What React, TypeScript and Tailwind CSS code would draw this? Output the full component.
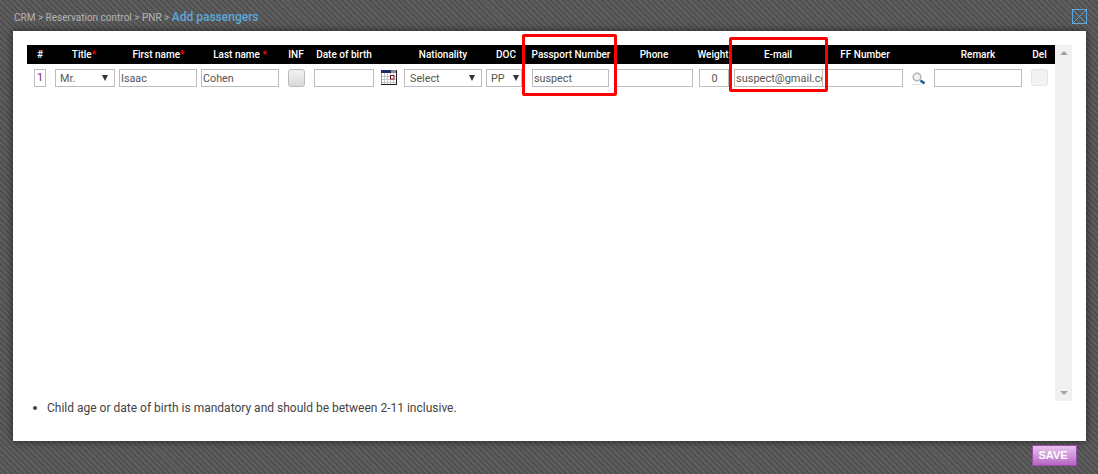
const font = "font-['Roboto',sans-serif]"

function Th({ w, label, star, className = '' }: { w: string; label: string; star?: string; className?: string }) {
  return (
    <div className={`${w} shrink-0 text-center whitespace-nowrap ${className}`}>
      {label}
      {star && <span className="text-[#e11]">{star}</span>}
    </div>
  )
}

function Arrow({ className = 'right-[6px]' }: { className?: string }) {
  return <span className={`absolute top-[5px] h-0 w-0 border-x-[3.5px] border-t-[6px] border-x-transparent border-t-[#333] ${className}`} />
}

function Box({ className = '', children }: { className?: string; children?: React.ReactNode }) {
  return (
    <div className={`relative h-[18px] shrink-0 border border-[#bdbdbd] bg-white pl-[1px] text-[10.75px] leading-[17px] text-[#555] overflow-hidden whitespace-nowrap ${className}`}>
      {children}
    </div>
  )
}

function CalendarIcon() {
  return (
    <svg width="16" height="15" viewBox="0 0 16 15" className="shrink-0">
      <rect x="0" y="0" width="16" height="15" fill="#fff" />
      <rect x="0" y="0" width="10" height="3" fill="#1d2a6b" />
      <rect x="10" y="0" width="5" height="3" fill="#8c8c8c" />
      <path d="M0 6.5h15M0 9.5h15M0 12.5h15M3.5 3v11M6.5 3v11M9.5 3v11M12.5 3v11" stroke="#c4c4cc" strokeWidth="1" />
      <path d="M15.5 0v15M0 14.5h16" stroke="#222" strokeWidth="1" />
      <path d="M0.5 3v11" stroke="#999" strokeWidth="1" />
      <rect x="9.5" y="5.5" width="3.5" height="3.5" fill="#fff" stroke="#7a1020" />
    </svg>
  )
}

function SearchIcon() {
  return (
    <svg width="14" height="14" viewBox="0 0 14 14" className="shrink-0">
      <circle cx="5" cy="5" r="3.8" fill="#f1f3f5" stroke="#b0b5ba" strokeWidth="1.5" />
      <path d="M8.5 8.5l4 3" stroke="#1f5c96" strokeWidth="2.6" />
      <path d="M0 12.5h9" stroke="#dedede" strokeWidth="1" />
    </svg>
  )
}

export default function App() {
  return (
    <div
      className={`relative h-[474px] w-[1098px] overflow-hidden bg-[#565656] ${font} bg-[repeating-linear-gradient(45deg,#4d4d4d_0px,#4d4d4d_1.4px,#5d5d5d_1.4px,#5d5d5d_4px)]`}
    >
      {/* breadcrumb */}
      <div className="flex h-[31px] items-center justify-between pl-[14px] pr-[11px] pt-[3px]">
        <div className="flex items-baseline text-[10px] text-[#b4b4b4]">
          <span>CRM &gt; Reservation control &gt; PNR &gt;&nbsp;</span>
          <span className="text-[12px] font-medium text-[#5ba9dc]">Add passengers</span>
        </div>
        <svg width="15" height="15" viewBox="0 0 15 15" className="mt-[-1px]">
          <rect x="0.5" y="0.5" width="14" height="14" fill="none" stroke="#5ba9dc" />
          <path d="M1 1l13 13M14 1L1 14" stroke="#5ba9dc" strokeWidth="0.8" />
        </svg>
      </div>

      {/* panel */}
      <div className="mx-[13px] flex h-[410px] w-[1073px] flex-col bg-white pl-[14px] pr-[14px] pt-[14px] shadow-[0_0_8px_rgba(0,0,0,0.6)]">
        <div className="flex h-[356px]">
          <div className="w-[1028px]">
            <div className="flex h-[19px] items-center bg-black text-[10px] font-medium leading-[19px] text-white">
              <Th w="w-[26px]" label="#" />
              <Th w="w-[60px]" label="Title" star="*" className="pl-[2px]" />
              <Th w="w-[86px]" label="First name" star="*" className="pl-[5px]" />
              <Th w="w-[82px]" label="Last name " star="*" />
              <Th w="w-[30px]" label="INF" />
              <Th w="w-[66px]" label="Date of birth" />
              <Th w="w-[107px]" label="Nationality" className="pl-[25px]" />
              <Th w="w-[44px]" label="DOC" />
              <Th w="w-[86px]" label="Passport Number" />
              <Th w="w-[80px]" label="Phone" />
              <Th w="w-[38px]" label="Weight" />
              <Th w="w-[92px]" label="E-mail" />
              <Th w="w-[82px]" label="FF Number" />
              <Th w="w-[118px]" label="Remark" className="pl-[26px]" />
              <Th w="w-[31px]" label="Del" />
            </div>

            <div className="mt-[5px] flex items-start">
              <div className="ml-[7px] h-[18px] w-[12px] shrink-0 border border-[#bdbdbd] text-center text-[11px] leading-[16px] text-[#7a2a80]">1</div>
              <Box className="ml-[9px] w-[60px] pl-[4px]">
                Mr.
                <Arrow />
              </Box>
              <Box className="ml-[4px] w-[78px]">Isaac</Box>
              <Box className="ml-[4px] w-[78px]">Cohen</Box>
              <div className="ml-[9px] h-[18px] w-[17px] shrink-0 rounded-[3px] border border-[#bbb] bg-[linear-gradient(#f2f2f2,#d8d8d8)]" />
              <Box className="ml-[9px] w-[60px]" />
              <div className="ml-[7px] shrink-0 pt-[1px]">
                <CalendarIcon />
              </div>
              <Box className="ml-[7px] w-[78px] pl-[5px]">
                Select
                <Arrow />
              </Box>
              <Box className="ml-[4px] w-[36px] pl-[4px]">
                PP
                <Arrow className="right-[2px]" />
              </Box>
              <Box className="ml-[10px] w-[77px] pl-[1px]">suspect</Box>
              <Box className="ml-[7px] w-[77px]" />
              <Box className="ml-[6px] w-[30px] pl-0 text-center">0</Box>
              <Box className="ml-[5px] w-[89px] text-[11px]">suspect@gmail.com</Box>
              <Box className="w-[80px] border-l-0" />
              <div className="ml-[9px] shrink-0 pt-[3px]">
                <SearchIcon />
              </div>
              <Box className="ml-[8px] w-[88px]" />
              <div className="ml-[9px] h-[17px] w-[17px] shrink-0 rounded-[3px] border border-[#e4e4e4] bg-[#f3f3f3]" />
            </div>
          </div>

          {/* scrollbar */}
          <div className="flex w-[17px] shrink-0 flex-col items-center justify-between bg-[#f1f1f1] py-[6px]">
            <div className="h-0 w-0 border-x-[4px] border-b-[4px] border-x-transparent border-b-[#a3a3a3]" />
            <div className="h-0 w-0 border-x-[4px] border-t-[4px] border-x-transparent border-t-[#a3a3a3]" />
          </div>
        </div>

        <ul className="flex items-center pl-[6px] text-[12px] leading-[14px] text-[#444]">
          <li className="flex items-center">
            <span className="mr-[10px] h-[4px] w-[4px] rounded-full bg-[#444]" />
            Child age or date of birth is mandatory and should be between 2-11 inclusive.
          </li>
        </ul>
      </div>

      {/* footer */}
      <div className="flex justify-end pr-[21px] pt-[4px]">
        <button className="flex h-[21px] w-[45px] items-center justify-center border border-[#9a4aa8] bg-[linear-gradient(#e6c2ec,#cf96d9_50%,#b565c3)] pr-[3px] font-['Liberation_Sans',sans-serif] text-[11px] font-bold text-white">
          SAVE
        </button>
      </div>

      {/* red highlight boxes */}
      <div className="absolute left-[522px] top-[34px] h-[62px] w-[95px] rounded-[2px] border-[3px] border-[#f00]" />
      <div className="absolute left-[729px] top-[37px] h-[55px] w-[99px] rounded-[2px] border-[3px] border-[#f00]" />
    </div>
  )
}
